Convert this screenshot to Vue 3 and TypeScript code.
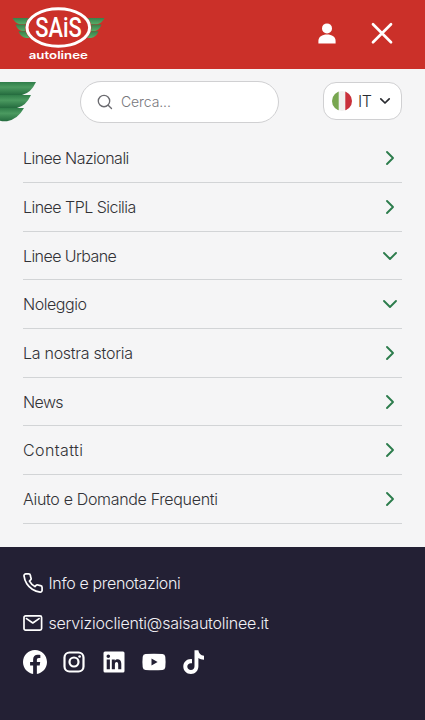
<script setup lang="ts">
interface MenuItem {
  label: string
  expandable: boolean
  tracking: number
}

const items: MenuItem[] = [
  { label: 'Linee Nazionali', expandable: false, tracking: -0.53 },
  { label: 'Linee TPL Sicilia', expandable: false, tracking: -0.53 },
  { label: 'Linee Urbane', expandable: true, tracking: -0.58 },
  { label: 'Noleggio', expandable: true, tracking: -0.45 },
  { label: 'La nostra storia', expandable: false, tracking: -0.27 },
  { label: 'News', expandable: false, tracking: -0.6 },
  { label: 'Contatti', expandable: false, tracking: 0.4 },
  { label: 'Aiuto e Domande Frequenti', expandable: false, tracking: -0.33 },
]
</script>

<template>
  <div class="page">
    <header class="topbar">
      <svg class="logo" width="94" height="58" viewBox="12 5 94 58">
        <defs>
          <linearGradient id="feather" x1="0" y1="0" x2="0" y2="1">
            <stop offset="0" stop-color="#38804a" />
            <stop offset="1" stop-color="#57ad68" />
          </linearGradient>
        </defs>
        <g fill="url(#feather)">
          <path d="M12.500 18H29V24.300H20Q15 23.500 12.500 18Z" />
          <path d="M15.500 24.600H28V31H22Q17.500 30.200 15.500 24.600Z" />
          <path d="M18.500 31.300H30V38H26Q20.500 37 18.500 31.300Z" />
          <path d="M104.500 18H88V24.300H97Q102 23.500 104.500 18Z" />
          <path d="M101.500 24.600H89V31H95Q99.500 30.200 101.500 24.600Z" />
          <path d="M98.500 31.300H87V38H91Q96.500 37 98.500 31.300Z" />
        </g>
        <ellipse cx="58.300" cy="27.500" rx="33.200" ry="20.700" fill="#cb3029" />
        <ellipse cx="58.300" cy="27.500" rx="31.300" ry="18.800" fill="#cb3029" stroke="#fff" stroke-width="3" />
        <text class="brand" x="35.200" y="37" textLength="46.500" lengthAdjust="spacingAndGlyphs">SAiS</text>
        <text class="sub" x="28.700" y="58.800" textLength="59.300" lengthAdjust="spacingAndGlyphs">autolinee</text>
      </svg>
      <div class="actions">
        <svg width="18" height="22" viewBox="0 0 18 22" fill="#fff">
          <circle cx="9" cy="5.400" r="5" />
          <path d="M.4 20.500V18C.4 14 4 11.600 9 11.600S17.600 14 17.600 18V20.500Z" />
        </svg>
        <svg width="24" height="24" viewBox="0 0 24 24" stroke="#fff" stroke-width="2.700" stroke-linecap="round">
          <path d="M3 2.200L21 20.200M21 2.200L3 20.200" />
        </svg>
      </div>
    </header>

    <main class="menu">
      <div class="tools">
        <svg class="wing" width="37" height="40" viewBox="0 0 37 40">
          <defs>
            <linearGradient id="wing" x1="0" y1="0" x2="0" y2="1">
              <stop offset="0" stop-color="#2f7d49" />
              <stop offset=".4" stop-color="#4b9a60" />
              <stop offset="1" stop-color="#246b3e" />
            </linearGradient>
          </defs>
          <g fill="url(#wing)">
            <path d="M0 0H36Q31 11 22 13H0Z" />
            <path d="M0 13H31Q26 24 17 26H0Z" />
            <path d="M0 26H24Q18 37 7 39.200Q3 39.700 0 38.700Z" />
          </g>
        </svg>
        <label class="search">
          <svg width="16" height="16" viewBox="0 0 16 16" fill="none" stroke="#6b6b70" stroke-width="1.350" stroke-linecap="round">
            <circle cx="7" cy="7" r="5.700" />
            <path d="M11.200 11.200L14.500 14.500" />
          </svg>
          <span>Cerca...</span>
        </label>
        <button class="lang" type="button">
          <svg width="20" height="20" viewBox="0 0 20 20">
            <clipPath id="round"><circle cx="10" cy="10" r="10" /></clipPath>
            <g clip-path="url(#round)">
              <path fill="#f1f0ee" d="M0 0H20V20H0Z" />
              <path fill="#78a650" d="M0 0H6.700V20H0Z" />
              <path fill="#c9303a" d="M13.300 0H20V20H13.300Z" />
            </g>
          </svg>
          <span>IT</span>
          <svg class="caret" width="12" height="8" viewBox="0 0 12 8" fill="none" stroke="#292b30" stroke-width="1.700" stroke-linecap="round" stroke-linejoin="round">
            <path d="M1.800 1.800L6 6L10.200 1.800" />
          </svg>
        </button>
      </div>

      <nav>
        <a v-for="item in items" :key="item.label" class="row">
          <span :style="{ letterSpacing: item.tracking + 'px' }">{{ item.label }}</span>
          <svg width="16" height="16" viewBox="0 0 16 16" fill="none" stroke="#2c7c4c" stroke-width="1.900" stroke-linecap="round" stroke-linejoin="round">
            <path :d="item.expandable ? 'M2 5L8 11L14 5' : 'M5 2L11 8L5 14'" />
          </svg>
        </a>
      </nav>
    </main>

    <footer class="footer">
      <a class="contact phone">
        <svg width="20" height="20" viewBox="1 1 22 22" fill="none" stroke="#fff" stroke-width="1.900" stroke-linejoin="round">
          <path d="M22 16.920v3a2 2 0 0 1-2.180 2 19.790 19.790 0 0 1-8.630-3.070 19.500 19.500 0 0 1-6-6 19.790 19.790 0 0 1-3.070-8.670A2 2 0 0 1 4.110 2h3a2 2 0 0 1 2 1.720c.127.960.361 1.903.7 2.810a2 2 0 0 1-.45 2.110L8.090 9.910a16 16 0 0 0 6 6l1.270-1.270a2 2 0 0 1 2.110-.45c.907.339 1.850.573 2.810.7A2 2 0 0 1 22 16.920z" />
        </svg>
        <span>Info e prenotazioni</span>
      </a>
      <a class="contact mail">
        <svg width="20" height="20" viewBox="0 0 20 20" fill="none" stroke="#fff" stroke-width="1.700" stroke-linecap="round" stroke-linejoin="round">
          <rect x="1" y="2.800" width="17.600" height="14.300" rx="1.600" />
          <path d="M3.500 5.600L9.800 10L16.100 5.600" />
        </svg>
        <span>servizioclienti@saisautolinee.it</span>
      </a>
      <div class="social">
        <svg width="24" height="24" viewBox="0 0 24 24" fill="#fff">
          <path d="M24 12.070C24 5.410 18.630 0 12 0S0 5.410 0 12.070C0 18.100 4.390 23.090 10.130 24v-8.440H7.080v-3.490h3.050V9.410c0-3.020 1.790-4.690 4.530-4.690 1.310 0 2.680.24 2.680.24v2.970h-1.510c-1.490 0-1.960.93-1.960 1.890v2.250h3.330l-.53 3.490h-2.800V24C19.610 23.090 24 18.100 24 12.070z" />
        </svg>
        <svg width="24" height="24" viewBox="0 0 24 24" fill="none" stroke="#fff" stroke-width="2.200">
          <rect x="2.500" y="2.500" width="19" height="19" rx="5" />
          <circle cx="12" cy="12" r="4.500" />
          <circle cx="17.600" cy="6.500" r="1.350" fill="#fff" stroke="none" />
        </svg>
        <svg width="24" height="24" viewBox="0 0 24 24" fill="#fff">
          <path fill-rule="evenodd" d="M3 1.500H21Q22.500 1.500 22.500 3V21Q22.500 22.500 21 22.500H3Q1.500 22.500 1.500 21V3Q1.500 1.500 3 1.500ZM4.700 9.400V19.300H7.900V9.400ZM6.300 4.500A1.800 1.800 0 1 0 6.300 8.100A1.800 1.800 0 1 0 6.300 4.500ZM9.800 9.400V19.300H12.900V14.400C12.900 11.500 16.200 11.200 16.200 14.400V19.300H19.300V13.800C19.300 8.900 14.800 8.200 12.800 10.700V9.400Z" />
        </svg>
        <svg width="24" height="24" viewBox="0 0 24 24" fill="#fff">
          <path fill-rule="evenodd" d="M3.500 4Q12 3.400 20.500 4Q23 4.200 23.300 6.700Q23.900 12 23.300 17.300Q23 19.800 20.500 20Q12 20.600 3.500 20Q1 19.800 .7 17.300Q.1 12 .7 6.700Q1 4.200 3.500 4ZM9.500 8.500V15.500L15.600 12Z" />
        </svg>
        <svg width="24" height="24" viewBox="0 0 24 24" fill="#fff">
          <path d="M12.500.3H16.400C16.600 3.400 18.700 5.500 22 5.700V9.700C19.900 9.700 18 9.100 16.400 8V16.300C16.400 20.800 13.200 24 8.900 24C4.600 24 1.300 20.700 1.300 16.500C1.300 12 5.300 8.500 10 9.200V13.300C7.600 12.600 5.300 14.100 5.300 16.400C5.300 18.500 6.900 20 8.900 20C11.100 20 12.500 18.500 12.500 16.200Z" />
        </svg>
      </div>
    </footer>
  </div>
</template>

<style>
body {
  background: #232034;
}
</style>

<style scoped>
.page {
  width: 100%;
  height: 720px;
  display: flex;
  flex-direction: column;
  overflow: hidden;
  font-family: Inter, 'Liberation Sans', sans-serif;
  font-weight: 300;
  color: #323236;
}
svg {
  display: block;
  flex: none;
}
.topbar {
  height: 69px;
  flex: none;
  box-sizing: border-box;
  padding: 5px 31px 0 12px;
  display: flex;
  justify-content: space-between;
  background: #cb3029;
}
.brand {
  font: 500 27.5px Roboto, sans-serif;
  fill: #fff;
}
.sub {
  font: 600 11px Inter, sans-serif;
  fill: #fff;
}
.actions {
  display: flex;
  align-items: center;
  gap: 34px;
  height: 57px;
}
.menu {
  height: 478px;
  flex: none;
  background: #f5f5f6;
}
.tools {
  height: 65.600px;
  display: flex;
  align-items: flex-start;
  box-sizing: border-box;
  padding: 12px 23px 0 0;
}
.wing {
  margin-top: 1px;
}
.search {
  box-sizing: border-box;
  width: 199px;
  height: 42px;
  margin-left: 43px;
  padding: 0 0 1px 16px;
  display: flex;
  align-items: center;
  gap: 8px;
  border: 1px solid #d0d0d2;
  border-radius: 21px;
  background: #fff;
  font-size: 14px;
  letter-spacing: -0.1px;
  color: #77777b;
}
.lang {
  box-sizing: border-box;
  width: 79px;
  height: 38px;
  margin: 1px 0 0 auto;
  padding: 0 10px 0 8px;
  display: flex;
  align-items: center;
  border: 1px solid #d0d0d2;
  border-radius: 13px;
  background: #fff;
  font: inherit;
  font-size: 16px;
  letter-spacing: -0.4px;
  color: #292b30;
}
.lang span {
  margin-left: 6px;
}
.caret {
  margin-left: auto;
}
nav {
  padding: 0 23px;
}
.row {
  height: 48.640px;
  box-sizing: border-box;
  padding-right: 4px;
  display: flex;
  align-items: center;
  justify-content: space-between;
  border-bottom: 1px solid #d2d4d6;
  font-size: 16px;
  white-space: nowrap;
}
.footer {
  flex: 1;
  padding: 26px 23px 0;
  background: #232034;
  color: #f1f0f5;
}
.contact {
  height: 20px;
  display: flex;
  align-items: center;
  gap: 5.500px;
  margin-bottom: 20px;
  font-size: 16px;
  white-space: nowrap;
}
.phone {
  letter-spacing: -0.35px;
}
.mail {
  letter-spacing: -0.22px;
}
.social {
  display: flex;
  gap: 15.800px;
  margin: -3px 0 0 -0.500px;
}
</style>
